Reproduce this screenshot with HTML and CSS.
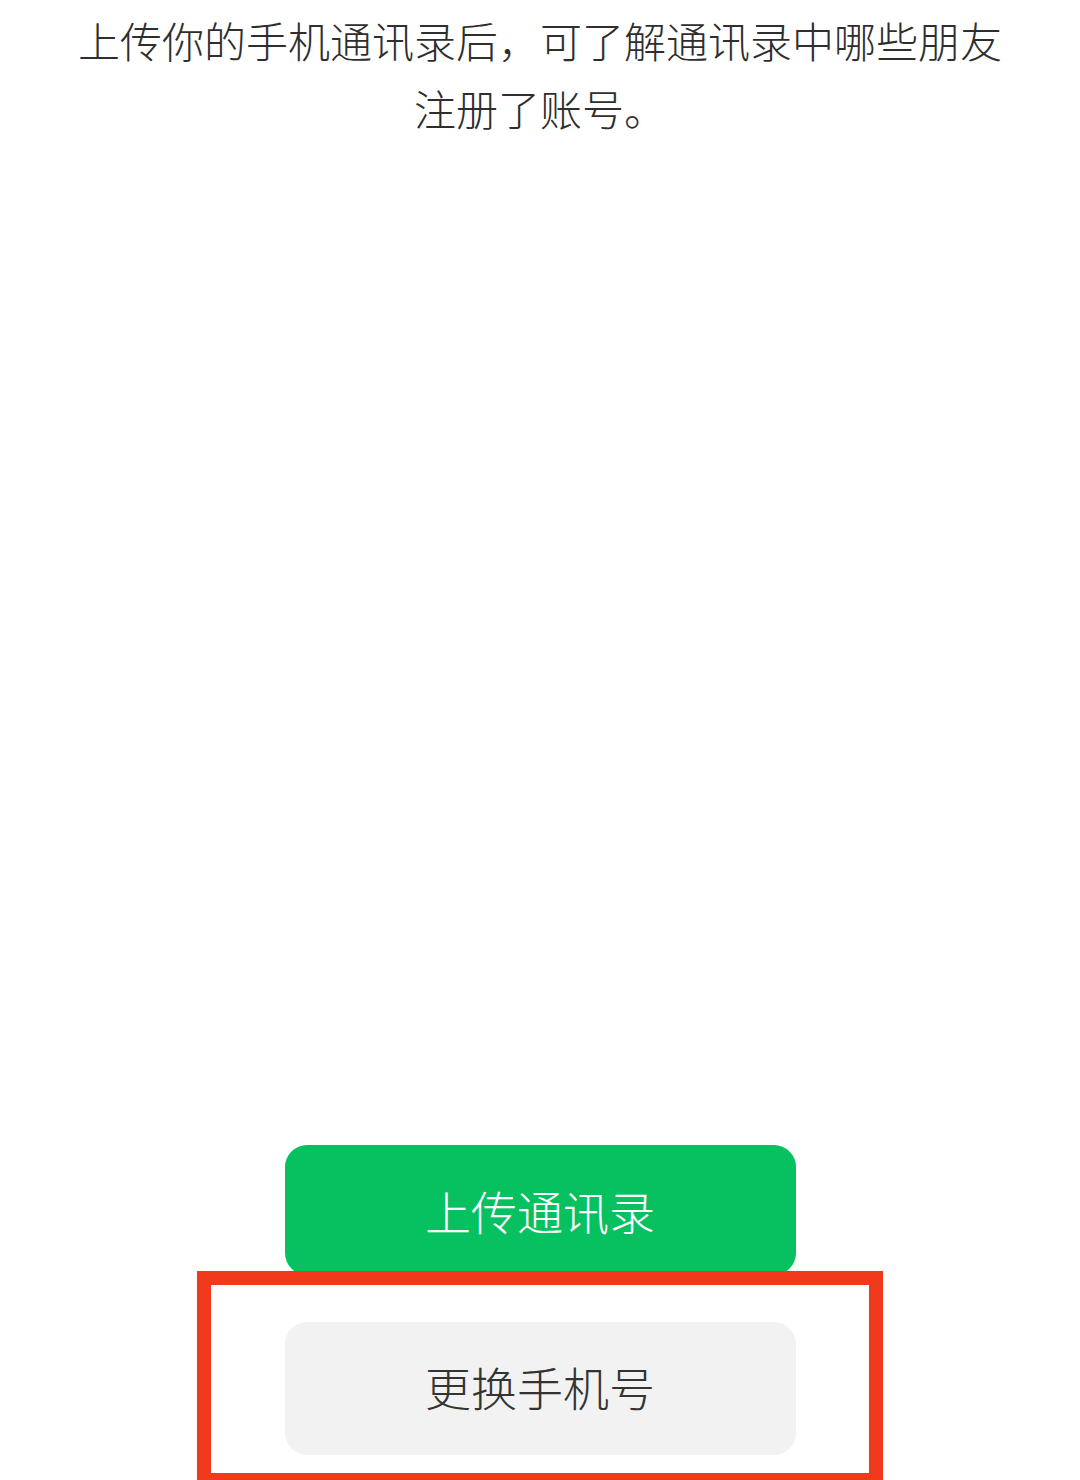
FILE: index.html
```html
<!DOCTYPE html>
<html lang="zh-CN">
<head>
    <meta charset="UTF-8">
    <meta name="viewport" content="width=device-width, initial-scale=1.0">
    <title>上传通讯录</title>
    <link rel="stylesheet" href="styles.css">
</head>
<body>
    <div class="page">
        <p class="intro">上传你的手机通讯录后，可了解通讯录中哪些朋友注册了账号。</p>

        <div class="actions">
            <button class="btn btn-primary">上传通讯录</button>
            <!-- 红框标注 -->
            <div class="highlight">
                <button class="btn btn-default">更换手机号</button>
            </div>
        </div>
    </div>
</body>
</html>
```

FILE: styles.css
```css
html, body {
    margin: 0;
    padding: 0;
    background-color: #fff;
    overflow: hidden;
}
body {
    font-family: "Noto Sans CJK SC", "Noto Sans", sans-serif;
    color: #2e2e2e;
}
.page {
    min-height: 1487px;
    display: flex;
    flex-direction: column;
    align-items: center;
}
.intro {
    width: 940px;
    margin: 0;
    padding-top: 6px;
    font-size: 42px;
    line-height: 68px;
    text-align: center;
    font-weight: 300;
}
.actions {
    margin-top: auto;
    display: flex;
    flex-direction: column;
    align-items: center;
}
.btn {
    width: 511px;
    border: none;
    border-radius: 22px;
    font-family: inherit;
    font-size: 46px;
    font-weight: 300;
    cursor: pointer;
    display: flex;
    align-items: center;
    justify-content: center;
}
.btn-primary {
    height: 130px;
    background-color: #07c160;
    color: #fff;
}
.btn-default {
    height: 133px;
    padding-bottom: 6px;
    background-color: #f2f2f2;
    color: #333;
}
.highlight {
    margin-top: -4px;
    width: 658px;
    padding: 37px 0 18px;
    border: 14px solid #f3391b;
    display: flex;
    justify-content: center;
    position: relative;
}
```
